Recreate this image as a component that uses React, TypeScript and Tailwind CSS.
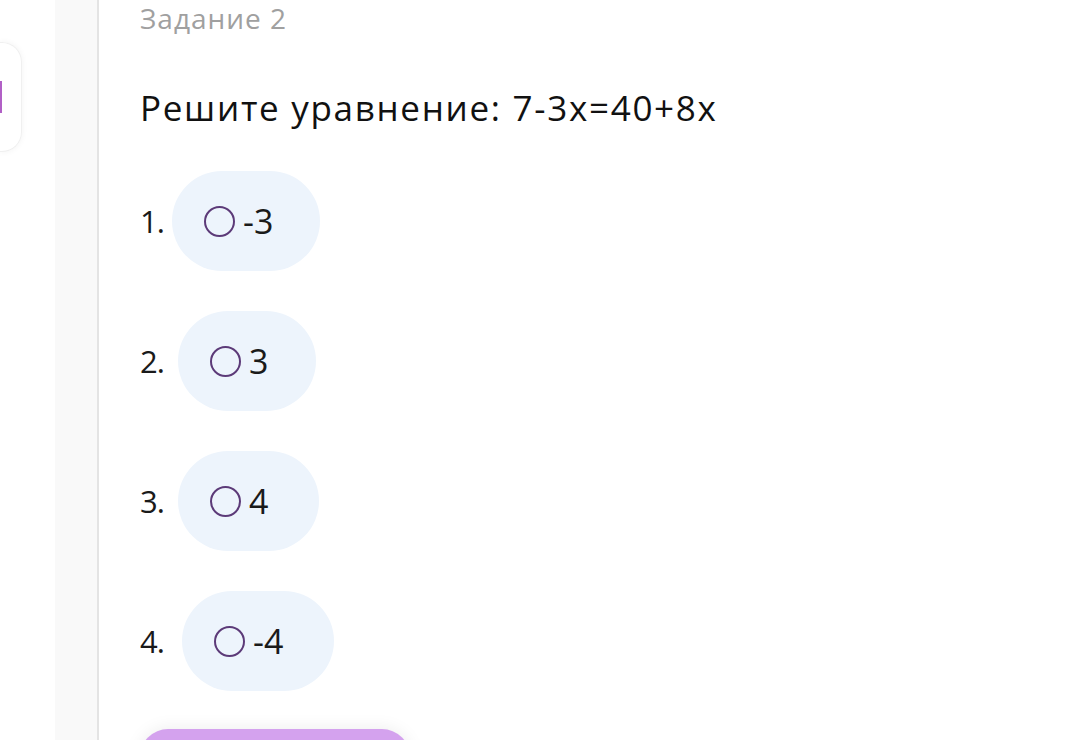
import React from "react";

const options = [
  { n: "1.", v: "-3", lw: "w-[32px]", pw: "w-[148px]" },
  { n: "2.", v: "3", lw: "w-[38px]", pw: "w-[138px]" },
  { n: "3.", v: "4", lw: "w-[38px]", pw: "w-[141px]" },
  { n: "4.", v: "-4", lw: "w-[42px]", pw: "w-[152px]" },
];

export default function App() {
  return (
    <div
      className="w-[1082px] h-[740px] overflow-hidden flex bg-white"
      style={{ fontFamily: '"Open Sans", "Noto Sans", sans-serif' }}
    >
      <div className="w-[55px] shrink-0 bg-white">
        <div className="mt-[42px] h-[110px] w-[22px] rounded-r-[20px] border border-l-0 border-[#f0f0f0] shadow-[0_0_6px_rgba(0,0,0,0.05)] flex items-center">
          <div className="w-[2px] h-[32px] bg-[#b160c6]" />
        </div>
      </div>
      <div className="w-[44px] shrink-0 bg-[#f9f9f9] border-r-2 border-[#e4e4e4]" />
      <div className="flex-1 pl-[41px] flex flex-col">
        <div className="text-[28px] leading-[38px] tracking-[1px] text-[#a0a0a0] -mt-[1px]">Задание 2</div>
        <div className="text-[35px] leading-[44px] tracking-[1.7px] text-[#111] mt-[49px]">
          Решите уравнение: 7-3x=40+8x
        </div>
        <div className="mt-[41px] flex flex-col gap-[40px]">
          {options.map((o) => (
            <div key={o.n} className="flex items-center">
              <span className={`${o.lw} shrink-0 text-[31px] text-[#1a1a1a] leading-none tracking-[-1px]`}>{o.n}</span>
              <div className={`${o.pw} h-[100px] rounded-full bg-[#edf4fc] flex items-center pl-[32px]`}>
                <span className="w-[31px] h-[31px] rounded-full border-2 border-[#5c3a78] shrink-0" />
                <span className="ml-[8px] text-[34px] text-[#1a1a1a] leading-none">{o.v}</span>
              </div>
            </div>
          ))}
        </div>
        <div className="mt-[38px] w-[270px] h-[60px] shrink-0 rounded-[28px] bg-[#d4a2ee] shadow-[0_0_18px_rgba(0,0,0,0.08)]" />
      </div>
    </div>
  );
}
